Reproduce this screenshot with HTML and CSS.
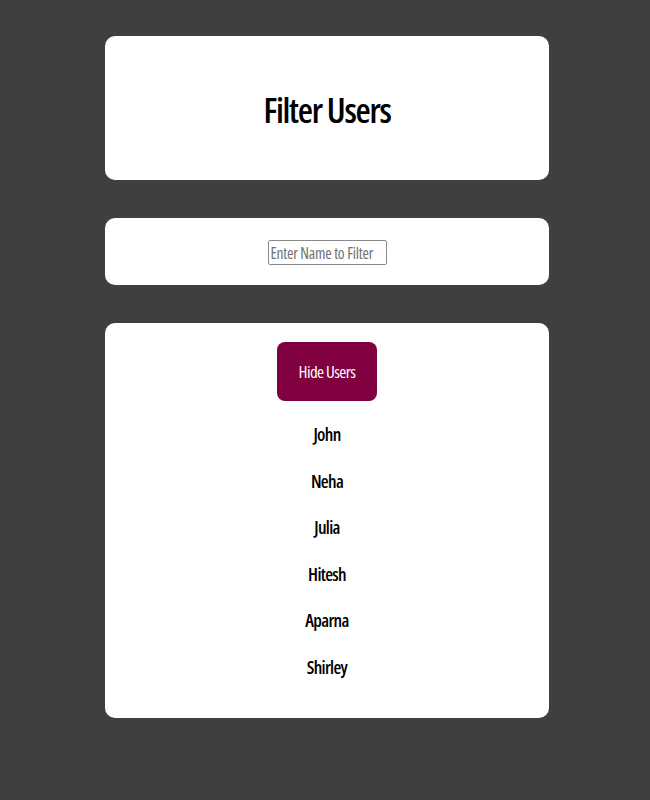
FILE: index.html
```html
<!DOCTYPE html>
<html>
<head>
<meta charset="utf-8">
<link rel="stylesheet" href="styles.css">
</head>
<body>
<div class="app">
  <div class="card header-card">
    <h1 class="title">Filter Users</h1>
  </div>
  <div class="card filter-card">
    <input class="filter-input" type="text" placeholder="Enter Name to Filter">
  </div>
  <div class="card list-card">
    <button class="toggle-btn">Hide Users</button>
    <ul class="user-list">
      <li>John</li>
      <li>Neha</li>
      <li>Julia</li>
      <li>Hitesh</li>
      <li>Aparna</li>
      <li>Shirley</li>
    </ul>
  </div>
</div>
</body>
</html>
```
FILE: styles.css
```css
html, body {
  margin: 0;
  padding: 0;
  background: #3f3f3f;
}
body {
  font-family: "Open Sans", "Noto Sans", sans-serif;
  font-stretch: 75%;
}
.app {
  display: flex;
  flex-direction: column;
  align-items: center;
  gap: 38px;
  padding: 36px 0 40px 4px;
}
.card {
  width: 444px;
  background: #ffffff;
  border-radius: 10px;
  box-sizing: border-box;
  display: flex;
  flex-direction: column;
  align-items: center;
}
.header-card {
  height: 144px;
  justify-content: center;
}
.title {
  margin: 0;
  font-size: 35px;
  font-weight: 600;
  letter-spacing: -1.3px;
  color: #000;
  line-height: 1;
  margin-top: 3px;
}
.filter-card {
  height: 67px;
  justify-content: center;
}
.filter-input {
  width: 119px;
  height: 25px;
  box-sizing: border-box;
  border: 1px solid #8a8a8a;
  border-radius: 2px;
  padding: 0 2px;
  font-family: "Open Sans", sans-serif;
  font-stretch: 75%;
  font-size: 15.5px;
  letter-spacing: -0.2px;
  margin-top: 2px;
}
.filter-input::placeholder {
  color: #6f6f6f;
}
.list-card {
  padding: 19px 0 39px;
}
.toggle-btn {
  width: 100px;
  height: 59px;
  border: none;
  border-radius: 8px;
  background: #800040;
  color: #ffffff;
  font-family: "Open Sans", "Noto Sans", sans-serif;
  font-stretch: 75%;
  font-size: 17px;
  font-weight: 500;
  letter-spacing: -0.6px;
}
.user-list {
  list-style: none;
  margin: 21px 0 0;
  padding: 0;
  display: flex;
  flex-direction: column;
  align-items: center;
  gap: 22px;
}
.user-list li {
  font-size: 18px;
  font-weight: 600;
  letter-spacing: -0.7px;
  line-height: 24.5px;
  color: #000;
}
```
